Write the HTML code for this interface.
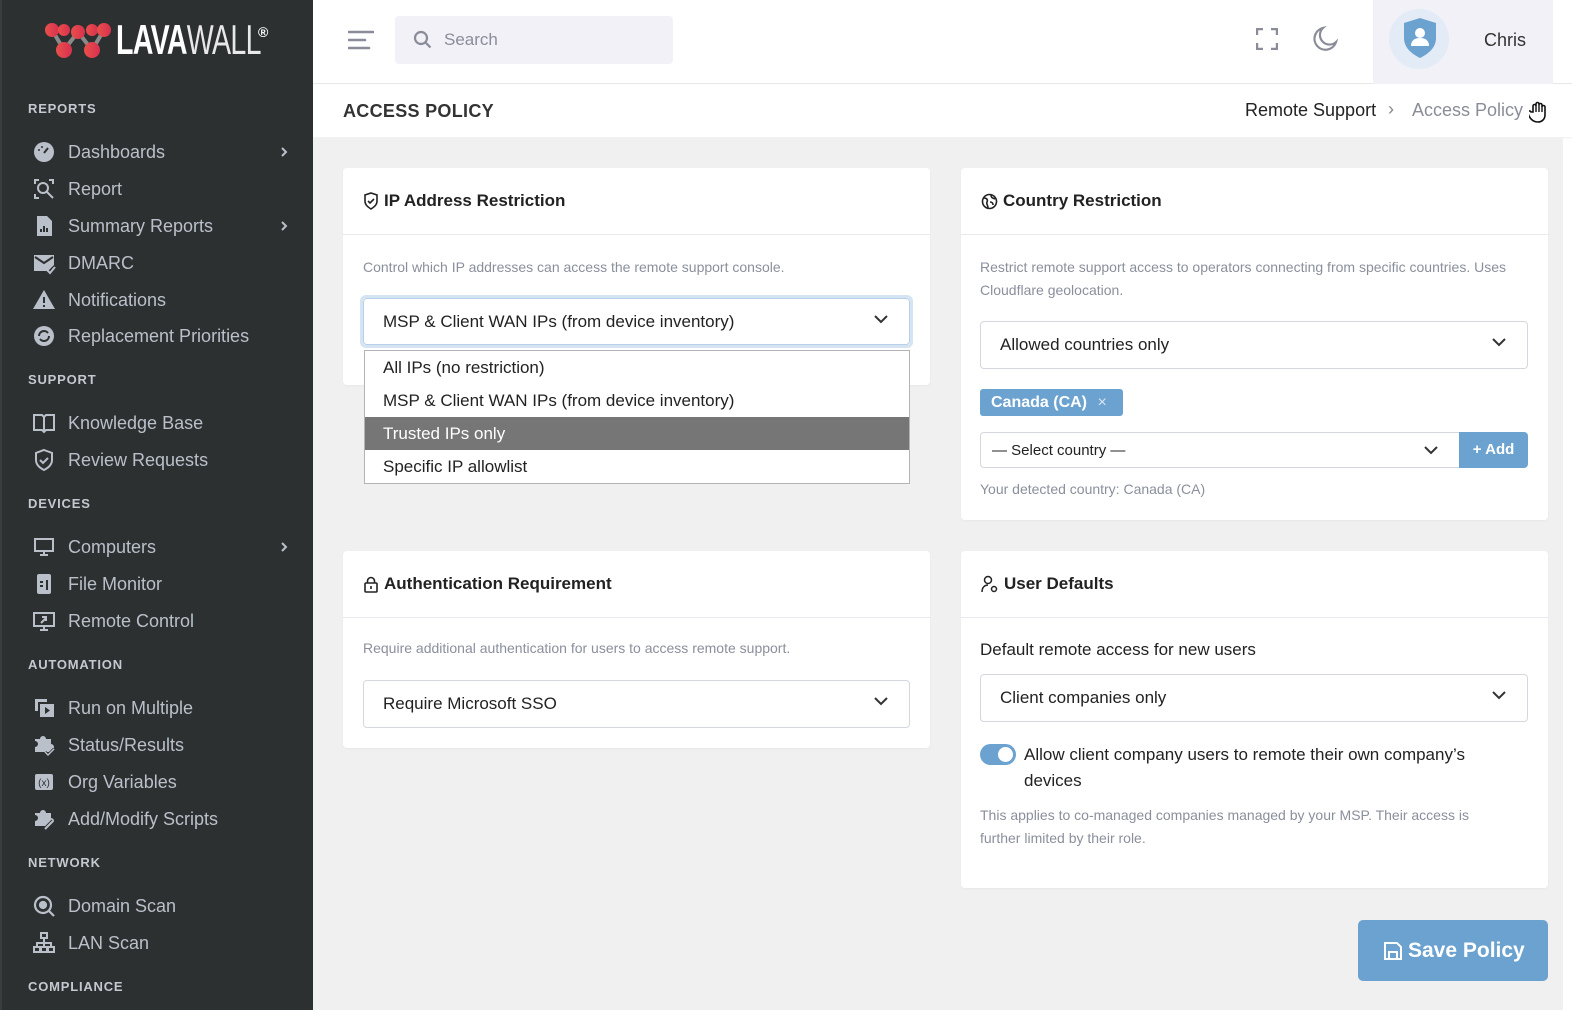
<!DOCTYPE html>
<html><head><meta charset="utf-8"><style>
*{box-sizing:border-box;margin:0;padding:0}
body{width:1572px;height:1010px;overflow:hidden;background:#fff;font-family:"Liberation Sans",sans-serif;position:relative}
.sb{position:absolute;left:0;top:0;width:313px;height:1010px;background:#2d3031;border-left:2px solid #3a3d3e}
.sec{position:absolute;left:26px;font-size:13px;font-weight:bold;letter-spacing:.8px;color:#c4c9d0}
.it{position:absolute;left:30px;height:30px;display:flex;align-items:center;color:#b9c0ca;font-size:18px;width:260px}
.it svg{width:24px;height:24px;margin-right:12px;flex:none}
.it .ch{position:absolute;right:4px;top:9px;width:8px;height:12px;margin:0}
.hdr{position:absolute;left:313px;top:0;right:0;height:84px;background:#fff;border-bottom:1px solid #e8e8e8}
.bc{position:absolute;left:313px;top:85px;width:1259px;height:52px;background:#fff;box-shadow:0 1px 2px rgba(0,0,0,.08)}
.main{position:absolute;left:313px;top:138px;width:1250px;height:872px;background:#f0f0f0}
.card{position:absolute;background:#fff;border-radius:4px;box-shadow:0 1px 2px rgba(0,0,0,.04)}
.ch2{height:67px;border-bottom:1px solid #e9e9ef;display:flex;align-items:center;padding-left:20px;font-weight:bold;font-size:17px;color:#222}
.ch2 svg{margin-right:5px}
.muted{color:#8a8f9c;font-size:14px;line-height:23px}
.sel{position:absolute;border:1px solid #d5d7de;border-radius:4px;height:48px;display:flex;align-items:center;padding-left:19px;font-size:17px;color:#222;background:#fff}
.sel .arr{position:absolute;right:20px;top:15px}
</style></head><body>
<div class="sb">
  <svg style="position:absolute;left:40px;top:22px" width="72" height="38" viewBox="0 0 72 38">
    <defs><linearGradient id="g" x1="0" x2="1"><stop offset="0" stop-color="#e8504a"/><stop offset="1" stop-color="#d9304f"/></linearGradient></defs>
    <path d="M10 8 L22 28 L36 10 L50 28 L62 8" stroke="#8a8a8a" stroke-width="4" fill="none"/>
    <circle cx="10" cy="8" r="7" fill="url(#g)"/><circle cx="22" cy="8" r="6" fill="url(#g)"/><circle cx="22" cy="28" r="8" fill="url(#g)"/>
    <circle cx="36" cy="10" r="7" fill="url(#g)"/><circle cx="50" cy="28" r="8" fill="url(#g)"/><circle cx="50" cy="8" r="6" fill="url(#g)"/><circle cx="62" cy="8" r="7" fill="url(#g)"/>
  </svg>
  <div style="position:absolute;left:114px;top:18px;color:#fff;font-size:42px;line-height:44px;transform:scaleX(.68);transform-origin:left;white-space:nowrap;letter-spacing:-1px"><b>LAVA</b><span style="font-weight:normal;color:#e8e8e8">WALL</span></div>
  <div style="position:absolute;left:256px;top:24px;color:#fff;font-size:14px;font-weight:bold">®</div>

  <div class="sec" style="top:101px">REPORTS</div>
  <div class="it" style="top:137px"><svg viewBox="0 0 24 24"><circle cx="12" cy="12" r="10" fill="#b9c0ca"/><path d="M12 13l4-5" stroke="#2d3031" stroke-width="2"/><circle cx="7" cy="10" r="1" fill="#2d3031"/><circle cx="10" cy="7" r="1" fill="#2d3031"/></svg>Dashboards<svg class="ch" viewBox="0 0 8 12" fill="none" stroke="#b9c0ca" stroke-width="2"><path d="M2 2l4 4-4 4"/></svg></div>
  <div class="it" style="top:174px"><svg viewBox="0 0 24 24" fill="none" stroke="#b9c0ca" stroke-width="2"><path d="M3 7V3h4M17 3h4v4M3 17v4h4"/><circle cx="11" cy="11" r="5"/><path d="M15 15l6 6"/></svg>Report</div>
  <div class="it" style="top:211px"><svg viewBox="0 0 24 24"><path d="M5 2h10l5 5v15H5z" fill="#b9c0ca"/><path d="M9 18v-3M12 18v-6M15 18v-4" stroke="#2d3031" stroke-width="2"/></svg>Summary Reports<svg class="ch" viewBox="0 0 8 12" fill="none" stroke="#b9c0ca" stroke-width="2"><path d="M2 2l4 4-4 4"/></svg></div>
  <div class="it" style="top:248px"><svg viewBox="0 0 24 24"><path d="M2 4h20v10l-6 6H2z" fill="#b9c0ca"/><path d="M3 6l9 6 9-6" stroke="#2d3031" stroke-width="2" fill="none"/><path d="M15 19l3 3 5-6" stroke="#b9c0ca" stroke-width="2" fill="none"/></svg>DMARC</div>
  <div class="it" style="top:285px"><svg viewBox="0 0 24 24"><path d="M12 2L23 21H1z" fill="#b9c0ca"/><path d="M12 9v6M12 17v2" stroke="#2d3031" stroke-width="2"/></svg>Notifications</div>
  <div class="it" style="top:321px"><svg viewBox="0 0 24 24"><circle cx="12" cy="12" r="10" fill="#b9c0ca"/><path d="M7 12a5 5 0 0 1 9-3M17 12a5 5 0 0 1-9 3" stroke="#2d3031" stroke-width="2" fill="none"/></svg>Replacement Priorities</div>

  <div class="sec" style="top:372px">SUPPORT</div>
  <div class="it" style="top:408px"><svg viewBox="0 0 24 24" fill="none" stroke="#b9c0ca" stroke-width="2"><path d="M2 4h8l2 2 2-2h8v15h-8l-2 2-2-2H2zM12 6v15"/></svg>Knowledge Base</div>
  <div class="it" style="top:445px"><svg viewBox="0 0 24 24" fill="none" stroke="#b9c0ca" stroke-width="2"><path d="M12 2l8 3v7c0 5-4 8-8 10-4-2-8-5-8-10V5z"/><path d="M8 12l3 3 5-5"/></svg>Review Requests</div>

  <div class="sec" style="top:496px">DEVICES</div>
  <div class="it" style="top:532px"><svg viewBox="0 0 24 24" fill="none" stroke="#b9c0ca" stroke-width="2"><rect x="3" y="4" width="18" height="12"/><path d="M8 20h8M12 16v4"/></svg>Computers<svg class="ch" viewBox="0 0 8 12" fill="none" stroke="#b9c0ca" stroke-width="2"><path d="M2 2l4 4-4 4"/></svg></div>
  <div class="it" style="top:569px"><svg viewBox="0 0 24 24"><rect x="5" y="2" width="14" height="20" rx="2" fill="#b9c0ca"/><path d="M8 10h3M8 14h3M15 8v10" stroke="#2d3031" stroke-width="2"/></svg>File Monitor</div>
  <div class="it" style="top:606px"><svg viewBox="0 0 24 24" fill="none" stroke="#b9c0ca" stroke-width="2"><rect x="2" y="4" width="20" height="13"/><path d="M8 21h8M12 17v4M9 14l5-5M10 8h4v4"/></svg>Remote Control</div>

  <div class="sec" style="top:657px">AUTOMATION</div>
  <div class="it" style="top:693px"><svg viewBox="0 0 24 24"><path d="M3 3h12v3H6v9H3z" fill="#b9c0ca"/><rect x="8" y="8" width="14" height="13" fill="#b9c0ca"/><path d="M13 11v7l5-3.5z" fill="#2d3031"/></svg>Run on Multiple</div>
  <div class="it" style="top:730px"><svg viewBox="0 0 24 24"><path d="M3 6h5a3 3 0 0 1 6 0h5v5a3 3 0 0 1 0 6v2H3v-5a3 3 0 0 0 0-6z" fill="#b9c0ca"/><path d="M13 19l3 3 6-6" stroke="#2d3031" stroke-width="3" fill="none"/><path d="M13 19l3 3 6-6" stroke="#b9c0ca" stroke-width="1.5" fill="none"/></svg>Status/Results</div>
  <div class="it" style="top:767px"><svg viewBox="0 0 24 24"><rect x="3" y="4" width="18" height="16" rx="2" fill="#b9c0ca"/><text x="12" y="16" text-anchor="middle" font-size="10" fill="#2d3031" font-family="Liberation Sans">(x)</text></svg>Org Variables</div>
  <div class="it" style="top:804px"><svg viewBox="0 0 24 24"><path d="M3 6h5a3 3 0 0 1 6 0h5v5a3 3 0 0 1 0 6v2H3v-5a3 3 0 0 0 0-6z" fill="#b9c0ca"/><path d="M13 22l8-8" stroke="#2d3031" stroke-width="4"/><path d="M13 22l8-8" stroke="#b9c0ca" stroke-width="2"/></svg>Add/Modify Scripts</div>

  <div class="sec" style="top:855px">NETWORK</div>
  <div class="it" style="top:891px"><svg viewBox="0 0 24 24" fill="none" stroke="#b9c0ca" stroke-width="2.2"><circle cx="11" cy="11" r="8"/><circle cx="11" cy="11" r="3" fill="#b9c0ca"/><path d="M17 17l5 5"/></svg>Domain Scan</div>
  <div class="it" style="top:928px"><svg viewBox="0 0 24 24" fill="none" stroke="#b9c0ca" stroke-width="2"><rect x="9" y="2" width="6" height="5"/><rect x="2" y="16" width="6" height="5"/><rect x="16" y="16" width="6" height="5"/><rect x="9" y="16" width="6" height="5"/><path d="M12 7v9M5 16v-4h14v4"/></svg>LAN Scan</div>

  <div class="sec" style="top:979px">COMPLIANCE</div>
</div>

<div class="hdr">
  <svg style="position:absolute;left:35px;top:29px" width="26" height="22" viewBox="0 0 26 22"><path d="M1 3h24M1 11h16M1 19h20" stroke="#8a8d99" stroke-width="2.6" stroke-linecap="round"/></svg>
  <div style="position:absolute;left:82px;top:16px;width:278px;height:48px;background:#f1f1f7;border-radius:4px">
    <svg style="position:absolute;left:18px;top:14px" width="20" height="20" viewBox="0 0 20 20" fill="none" stroke="#8a8d99" stroke-width="2.2"><circle cx="8" cy="8" r="6"/><path d="M12.5 12.5l5 5"/></svg>
    <span style="position:absolute;left:49px;top:14px;font-size:17px;color:#8a8d99">Search</span>
  </div>
  <svg style="position:absolute;left:943px;top:28px" width="22" height="22" viewBox="0 0 22 22" fill="none" stroke="#8a8d99" stroke-width="2.4"><path d="M1 7V1h6M15 1h6v6M1 15v6h6M15 21h6v-6"/></svg>
  <svg style="position:absolute;left:999px;top:26px" width="26" height="26" viewBox="0 0 26 26" fill="none" stroke="#8a8d99" stroke-width="2.2"><path d="M11 2a11 11 0 1 0 13 14A9 9 0 0 1 11 2z"/></svg>
  <div style="position:absolute;left:1060px;top:0;width:180px;height:84px;background:#f1f1f7">
    <div style="position:absolute;left:16px;top:9px;width:60px;height:60px;border-radius:50%;background:#e3ecf6"></div>
    <svg style="position:absolute;left:30px;top:18px" width="34" height="40" viewBox="0 0 34 40"><path d="M17 0l16 5v15c0 10-8 16-16 20C9 36 1 30 1 20V5z" fill="#6ba2cf"/><circle cx="17" cy="15" r="5" fill="#fff"/><path d="M8 28c0-6 4-8 9-8s9 2 9 8z" fill="#fff"/></svg>
    <span style="position:absolute;left:111px;top:30px;font-size:18px;color:#333">Chris</span>
  </div>
</div>

<div class="bc">
  <span style="position:absolute;left:30px;top:16px;font-size:18px;font-weight:bold;color:#333;letter-spacing:.3px">ACCESS POLICY</span>
  <span style="position:absolute;left:932px;top:15px;font-size:18px;color:#222">Remote Support</span>
  <span style="position:absolute;left:1075px;top:14px;font-size:18px;color:#888">›</span>
  <span style="position:absolute;left:1099px;top:15px;font-size:18px;color:#8a8d99">Access Policy</span>
  <svg style="position:absolute;left:1216px;top:16px" width="18" height="22" viewBox="0 0 18 22"><path d="M4 11V5a1.5 1.5 0 0 1 3 0V3a1.5 1.5 0 0 1 3 0v1a1.5 1.5 0 0 1 3 0v2a1.5 1.5 0 0 1 3 0v8c0 4-3 7-7 7s-7-2-9-6l-1-3a1.5 1.5 0 0 1 3-1z" fill="#fff" stroke="#111" stroke-width="1.6"/><path d="M7 5v6M10 4v7M13 6v5" stroke="#111" stroke-width="1.4"/></svg>
</div>

<div class="main"></div>

<!-- Card 1 -->
<div class="card" style="left:343px;top:168px;width:587px;height:217px">
  <div class="ch2"><svg width="16" height="18" viewBox="0 0 16 18" fill="none" stroke="#222" stroke-width="1.6"><path d="M8 1l6 2v6c0 4-3 6-6 8-3-2-6-4-6-8V3z"/><path d="M5 9l2 2 4-4"/></svg>IP Address Restriction</div>
  <div class="muted" style="position:absolute;left:20px;top:88px">Control which IP addresses can access the remote support console.</div>
</div>
<div style="position:absolute;left:360px;top:295px;width:553px;height:53px;border:3px solid #d5e4f2;border-radius:6px"></div>
<div class="sel" style="left:363px;top:298px;width:547px;height:47px;border-color:#b7d0e8">MSP &amp; Client WAN IPs (from device inventory)<svg class="arr" width="16" height="10" viewBox="0 0 16 10" fill="none" stroke="#333" stroke-width="2"><path d="M2 2l6 6 6-6"/></svg></div>
<div style="position:absolute;left:364px;top:350px;width:546px;height:134px;background:#fff;border:1px solid #b4b4b4;font-size:17px;color:#222">
  <div style="height:33px;line-height:33px;padding-left:18px">All IPs (no restriction)</div>
  <div style="height:33px;line-height:33px;padding-left:18px">MSP &amp; Client WAN IPs (from device inventory)</div>
  <div style="height:33px;line-height:33px;padding-left:18px;background:#767676;color:#fff">Trusted IPs only</div>
  <div style="height:33px;line-height:33px;padding-left:18px">Specific IP allowlist</div>
</div>

<!-- Card 2 -->
<div class="card" style="left:961px;top:168px;width:587px;height:352px">
  <div class="ch2"><svg width="17" height="17" viewBox="0 0 17 17" fill="none" stroke="#222" stroke-width="1.6"><circle cx="8.5" cy="8.5" r="7"/><path d="M3 5c3 0 4 2 3 4s1 3 1 6M10 2c0 3 2 3 4 4M9 9c2 0 3 1 3 3" /></svg>Country Restriction</div>
  <div class="muted" style="position:absolute;left:19px;top:88px;width:530px">Restrict remote support access to operators connecting from specific countries. Uses Cloudflare geolocation.</div>
  <div class="sel" style="left:19px;top:153px;width:548px">Allowed countries only<svg class="arr" width="16" height="10" viewBox="0 0 16 10" fill="none" stroke="#333" stroke-width="2"><path d="M2 2l6 6 6-6"/></svg></div>
  <div style="position:absolute;left:19px;top:221px;width:143px;height:27px;background:#6ba2cf;border-radius:3px;color:#fff;font-weight:bold;font-size:16px;line-height:27px;padding-left:11px">Canada (CA) <span style="font-weight:normal;color:#d6e6f4;margin-left:6px">×</span></div>
  <div class="sel" style="left:19px;top:264px;width:480px;height:36px;border-radius:4px 0 0 4px;font-size:15px;padding-left:11px">— Select country —<svg class="arr" style="top:12px;right:20px" width="16" height="10" viewBox="0 0 16 10" fill="none" stroke="#333" stroke-width="2"><path d="M2 2l6 6 6-6"/></svg></div>
  <div style="position:absolute;left:498px;top:264px;width:69px;height:36px;background:#6ba2cf;border-radius:0 4px 4px 0;color:#fff;font-size:15px;font-weight:bold;line-height:36px;text-align:center">+ Add</div>
  <div class="muted" style="position:absolute;left:19px;top:310px">Your detected country: Canada (CA)</div>
</div>

<!-- Card 3 -->
<div class="card" style="left:343px;top:551px;width:587px;height:197px">
  <div class="ch2"><svg width="16" height="17" viewBox="0 0 16 17" fill="none" stroke="#222" stroke-width="1.6"><rect x="2" y="7" width="12" height="9" rx="1"/><path d="M4.5 7V5a3.5 3.5 0 0 1 7 0v2M8 10v3"/></svg>Authentication Requirement</div>
  <div class="muted" style="position:absolute;left:20px;top:86px">Require additional authentication for users to access remote support.</div>
  <div class="sel" style="left:20px;top:129px;width:547px">Require Microsoft SSO<svg class="arr" width="16" height="10" viewBox="0 0 16 10" fill="none" stroke="#333" stroke-width="2"><path d="M2 2l6 6 6-6"/></svg></div>
</div>

<!-- Card 4 -->
<div class="card" style="left:961px;top:551px;width:587px;height:337px">
  <div class="ch2"><svg width="18" height="18" viewBox="0 0 18 18" fill="none" stroke="#222" stroke-width="1.5"><circle cx="7" cy="5" r="3.5"/><path d="M1 17c0-5 3-7 6-7"/><circle cx="13" cy="14" r="2.5"/></svg>User Defaults</div>
  <div style="position:absolute;left:19px;top:89px;font-size:17px;color:#222">Default remote access for new users</div>
  <div class="sel" style="left:19px;top:123px;width:548px">Client companies only<svg class="arr" width="16" height="10" viewBox="0 0 16 10" fill="none" stroke="#333" stroke-width="2"><path d="M2 2l6 6 6-6"/></svg></div>
  <div style="position:absolute;left:19px;top:193px;width:36px;height:21px;border-radius:11px;background:#6ba2cf"><div style="position:absolute;right:3px;top:3px;width:15px;height:15px;border-radius:50%;background:#fff"></div></div>
  <div style="position:absolute;left:63px;top:191px;width:500px;font-size:17px;line-height:26px;color:#222">Allow client company users to remote their own company’s devices</div>
  <div class="muted" style="position:absolute;left:19px;top:253px;width:530px">This applies to co-managed companies managed by your MSP. Their access is further limited by their role.</div>
</div>

<div style="position:absolute;left:1358px;top:920px;width:190px;height:61px;background:#6ba2cf;border-radius:5px;color:#fff;font-size:21px;font-weight:bold;line-height:61px;padding-left:26px">
  <svg style="vertical-align:-3px;margin-right:6px" width="18" height="18" viewBox="0 0 18 18" fill="none" stroke="#fff" stroke-width="2"><path d="M1 1h12l4 4v12H1z"/><rect x="5" y="10" width="8" height="7"/></svg>Save Policy
</div>
</body></html>
